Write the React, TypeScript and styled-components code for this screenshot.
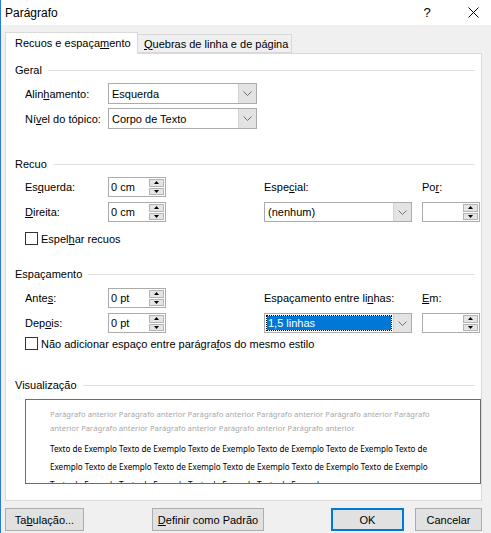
import styled, { createGlobalStyle } from "styled-components";

const GlobalStyle = createGlobalStyle`
  html, body {
    margin: 0;
    padding: 0;
    background: #f0f0f0;
  }
  body {
    font-family: "Liberation Sans", Arial, sans-serif;
    font-size: 11px;
    color: #000;
  }
`;

const Window = styled.div`
  width: 491px;
  height: 533px;
  box-sizing: border-box;
  border-left: 1px solid #2b7bd3;
  background: #f0f0f0;
  display: flex;
  flex-direction: column;
  overflow: hidden;
`;

const TitleBar = styled.div`
  height: 25px;
  background: #fff;
  display: flex;
  align-items: center;
  padding-left: 4px;
  font-size: 12px;
`;

const Title = styled.div`
  flex: 1;
`;

const TitleButton = styled.div<{ $w: number }>`
  width: ${(p) => p.$w}px;
  height: 25px;
  display: flex;
  align-items: center;
  justify-content: center;
  font-size: 13px;
`;

const Body = styled.div`
  padding: 7px 9px 0 4px;
  display: flex;
  flex-direction: column;
`;

const Tabs = styled.div`
  display: flex;
  align-items: flex-end;
  height: 21px;
  position: relative;
  z-index: 1;
`;

const Tab = styled.div<{ $active?: boolean; $w: number }>`
  box-sizing: border-box;
  width: ${(p) => p.$w}px;
  height: ${(p) => (p.$active ? 22 : 19)}px;
  margin-bottom: ${(p) => (p.$active ? -1 : 0)}px;
  padding-left: ${(p) => (p.$active ? 9 : 6)}px;
  display: flex;
  align-items: center;
  border: 1px solid #d9d9d9;
  border-bottom: ${(p) => (p.$active ? "none" : "1px solid #d9d9d9")};
  border-left: ${(p) => (p.$active ? "1px solid #d9d9d9" : "none")};
  background: ${(p) => (p.$active ? "#fff" : "#f0f0f0")};
  padding-bottom: ${(p) => (p.$active ? 1 : 0)}px;
`;

const Panel = styled.div`
  box-sizing: border-box;
  width: 477px;
  height: 448px;
  border: 1px solid #d9d9d9;
  background: #fff;
  padding: 8px 0 0 9px;
  display: flex;
  flex-direction: column;
`;

const Header = styled.div<{ $mt: number }>`
  height: 16px;
  margin-top: ${(p) => p.$mt}px;
  display: flex;
  align-items: center;
  gap: 6px;
  padding-right: 6px;
`;

const Rule = styled.div`
  flex: 1;
  height: 1px;
  background: #e0e0e0;
`;

const GeneralGrid = styled.div`
  margin: 5px 0 0 10px;
  display: grid;
  grid-template-columns: 83px 149px;
  grid-auto-rows: 21px;
  row-gap: 4px;
  align-items: center;
`;

const FieldGrid = styled.div<{ $mt: number }>`
  margin: ${(p) => p.$mt}px 0 0 10px;
  display: grid;
  grid-template-columns: 83px 58px 98px 148px 10px 58px;
  grid-template-rows: 20px 20px;
  row-gap: 5px;
  align-items: center;
`;

const Label = styled.div<{ $col?: number; $row?: number }>`
  grid-column: ${(p) => p.$col ?? "auto"};
  grid-row: ${(p) => p.$row ?? "auto"};
  white-space: nowrap;
`;

const Key = styled.span`
  text-decoration: underline;
  text-underline-offset: 1px;
`;

const SelectBox = styled.div<{ $col?: number; $row?: number; $h: number }>`
  grid-column: ${(p) => p.$col ?? "auto"};
  grid-row: ${(p) => p.$row ?? "auto"};
  box-sizing: border-box;
  height: ${(p) => p.$h}px;
  border: 1px solid #ababab;
  display: flex;
  background: #fff;
`;

const SelectValue = styled.div<{ $focused?: boolean }>`
  flex: 1;
  display: flex;
  align-items: center;
  margin: 2px;
  padding-left: 1px;
  background: ${(p) => (p.$focused ? "#0078d7" : "transparent")};
  color: ${(p) => (p.$focused ? "#fff" : "#000")};
  outline: ${(p) => (p.$focused ? "1px dotted #000" : "none")};
  white-space: nowrap;
`;

const Arrow = styled.div`
  width: 17px;
  background: #e3e3e3;
  border-left: 1px solid #d3d3d3;
  display: flex;
  align-items: center;
  justify-content: center;
`;

const SpinBox = styled.div<{ $col: number; $row: number }>`
  grid-column: ${(p) => p.$col};
  grid-row: ${(p) => p.$row};
  box-sizing: border-box;
  height: 20px;
  border: 1px solid #ababab;
  display: flex;
  background: #fff;
`;

const SpinValue = styled.div`
  flex: 1;
  display: flex;
  align-items: center;
  padding-left: 2px;
  white-space: nowrap;
`;

const SpinButtons = styled.div`
  width: 15px;
  display: flex;
  flex-direction: column;
  gap: 1px;
  padding: 1px 1px 1px 0;
`;

const SpinButton = styled.div`
  flex: 1;
  background: #e5e5e5;
  border: 1px solid #b4b4b4;
  display: flex;
  align-items: center;
  justify-content: center;
`;

const CheckRow = styled.div<{ $mt: number }>`
  margin: ${(p) => p.$mt}px 0 0 10px;
  height: 13px;
  display: flex;
  align-items: center;
  gap: 3px;
  white-space: nowrap;
`;

const CheckBox = styled.div`
  box-sizing: border-box;
  width: 13px;
  height: 13px;
  border: 1px solid #333;
  background: #fff;
`;

const Preview = styled.div`
  box-sizing: border-box;
  margin: 6px 0 0 10px;
  width: 456px;
  height: 85px;
  border: 1px solid #6d6d6d;
  padding: 7px 0 0 24px;
  overflow: hidden;
  font-family: "Noto Sans", "Liberation Sans", sans-serif;
`;

const PreviewLine = styled.div<{ $prev?: boolean }>`
  white-space: nowrap;
  font-size: ${(p) => (p.$prev ? 7.7 : 8.1)}px;
  line-height: ${(p) => (p.$prev ? 14 : 18)}px;
  color: ${(p) => (p.$prev ? "#a8a8a8" : "#000")};
`;

const PreviewGap = styled.div`
  height: 5px;
`;

const Footer = styled.div`
  margin-top: 7px;
  display: flex;
  padding: 0 9px 0 4px;
`;

const Button = styled.div<{ $w: number; $ml?: number; $default?: boolean }>`
  box-sizing: border-box;
  width: ${(p) => p.$w}px;
  height: 23px;
  margin-left: ${(p) => (p.$ml === undefined ? 0 : p.$ml + "px")};
  background: #e1e1e1;
  border: 1px solid ${(p) => (p.$default ? "#0078d7" : "#adadad")};
  box-shadow: ${(p) => (p.$default ? "inset 0 0 0 1px #0078d7" : "none")};
  display: flex;
  align-items: center;
  justify-content: center;
  white-space: nowrap;
`;

const Push = styled.div`
  flex: 1;
`;

const Chevron = () => (
  <svg width="9" height="5" viewBox="0 0 9 5">
    <polyline points="0.5,0.5 4.5,4.5 8.5,0.5" fill="none" stroke="#707070" strokeWidth="1" />
  </svg>
);

const Tri = ({ up }: { up?: boolean }) => (
  <svg width="5" height="3" viewBox="0 0 5 3">
    <polygon points={up ? "2.5,0 5,3 0,3" : "0,0 5,0 2.5,3"} fill="#000" />
  </svg>
);

const Select = ({
  value,
  col,
  row,
  h = 21,
  focused,
}: {
  value: string;
  col?: number;
  row?: number;
  h?: number;
  focused?: boolean;
}) => (
  <SelectBox $col={col} $row={row} $h={h}>
    <SelectValue $focused={focused}>{value}</SelectValue>
    <Arrow>
      <Chevron />
    </Arrow>
  </SelectBox>
);

const Spinner = ({ value, col, row }: { value: string; col: number; row: number }) => (
  <SpinBox $col={col} $row={row}>
    <SpinValue>{value}</SpinValue>
    <SpinButtons>
      <SpinButton>
        <Tri up />
      </SpinButton>
      <SpinButton>
        <Tri />
      </SpinButton>
    </SpinButtons>
  </SpinBox>
);

const prevText =
  "Parágrafo anterior Parágrafo anterior Parágrafo anterior Parágrafo anterior Parágrafo anterior Parágrafo";
const prevText2 = "anterior Parágrafo anterior Parágrafo anterior Parágrafo anterior Parágrafo anterior";
const sample = "Texto de Exemplo ";

function App() {
  return (
    <>
      <GlobalStyle />
      <Window>
        <TitleBar>
          <Title>Parágrafo</Title>
          <TitleButton $w={56}>?</TitleButton>
          <TitleButton $w={36}>
            <svg width="11" height="11" viewBox="0 0 11 11">
              <path d="M0.5 0.5 L10.5 10.5 M10.5 0.5 L0.5 10.5" stroke="#000" strokeWidth="1" />
            </svg>
          </TitleButton>
        </TitleBar>
        <Body>
          <Tabs>
            <Tab $active $w={133}>
              Recuos e espaça<Key>m</Key>ento
            </Tab>
            <Tab $w={154}>
              <Key>Q</Key>uebras de linha e de página
            </Tab>
          </Tabs>
          <Panel>
            <Header $mt={0}>
              Geral
              <Rule />
            </Header>
            <GeneralGrid>
              <Label>
                Alin<Key>h</Key>amento:
              </Label>
              <Select value="Esquerda" />
              <Label>
                Ní<Key>v</Key>el do tópico:
              </Label>
              <Select value="Corpo de Texto" />
            </GeneralGrid>

            <Header $mt={27}>
              Recuo
              <Rule />
            </Header>
            <FieldGrid $mt={5}>
              <Label $col={1} $row={1}>
                Es<Key>q</Key>uerda:
              </Label>
              <Spinner value="0 cm" col={2} row={1} />
              <Label $col={1} $row={2}>
                <Key>D</Key>ireita:
              </Label>
              <Spinner value="0 cm" col={2} row={2} />
              <Label $col={4} $row={1}>
                Espe<Key>c</Key>ial:
              </Label>
              <Select value="(nenhum)" col={4} row={2} h={20} />
              <Label $col={6} $row={1}>
                Po<Key>r</Key>:
              </Label>
              <Spinner value="" col={6} row={2} />
            </FieldGrid>
            <CheckRow $mt={10}>
              <CheckBox />
              <span>
                Espel<Key>h</Key>ar recuos
              </span>
            </CheckRow>

            <Header $mt={21}>
              Espaçamento
              <Rule />
            </Header>
            <FieldGrid $mt={6}>
              <Label $col={1} $row={1}>
                Ante<Key>s</Key>:
              </Label>
              <Spinner value="0 pt" col={2} row={1} />
              <Label $col={1} $row={2}>
                Dep<Key>o</Key>is:
              </Label>
              <Spinner value="0 pt" col={2} row={2} />
              <Label $col={4} $row={1}>
                Espaçamento entre li<Key>n</Key>has:
              </Label>
              <Select value="1,5 linhas" col={4} row={2} h={20} focused />
              <Label $col={6} $row={1}>
                <Key>E</Key>m:
              </Label>
              <Spinner value="" col={6} row={2} />
            </FieldGrid>
            <CheckRow $mt={4}>
              <CheckBox />
              <span>
                Não adicionar espaço entre parágra<Key>f</Key>os do mesmo estilo
              </span>
            </CheckRow>

            <Header $mt={27}>
              Visualização
              <Rule />
            </Header>
            <Preview>
              <PreviewLine $prev>{prevText}</PreviewLine>
              <PreviewLine $prev>{prevText2}</PreviewLine>
              <PreviewGap />
              <PreviewLine>{sample.repeat(5) + "Texto de"}</PreviewLine>
              <PreviewLine>{"Exemplo " + sample.repeat(4) + "Texto de Exemplo"}</PreviewLine>
              <PreviewLine>{sample.repeat(3) + "Texto de Exemplo"}</PreviewLine>
            </Preview>
          </Panel>
        </Body>
        <Footer>
          <Button $w={79}>
            Ta<Key>b</Key>ulação...
          </Button>
          <Button $w={112} $ml={68}>
            <Key>D</Key>efinir como Padrão
          </Button>
          <Push />
          <Button $w={73} $default>
            OK
          </Button>
          <Button $w={67} $ml={11}>
            Cancelar
          </Button>
        </Footer>
      </Window>
    </>
  );
}

export default App;
